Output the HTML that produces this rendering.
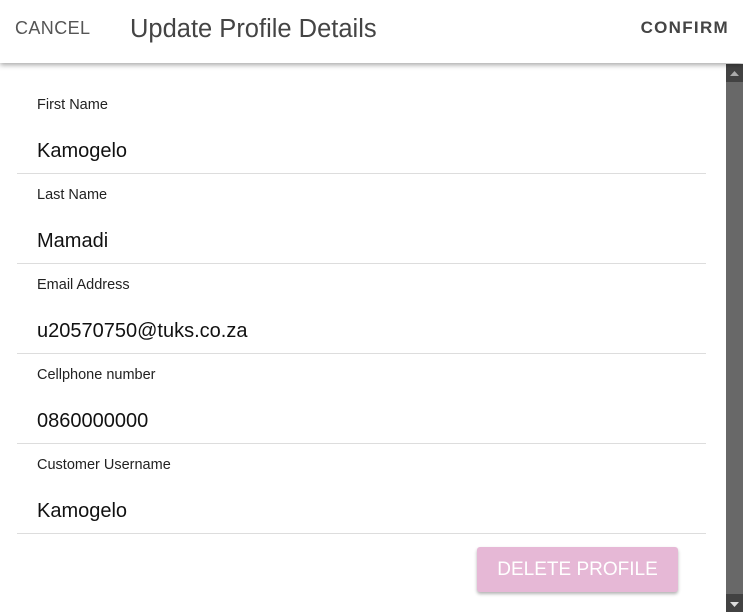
<!DOCTYPE html>
<html><head><style>
body{margin:0;width:743px;height:612px;overflow:hidden;background:#fff;font-family:"Liberation Sans",Arial,sans-serif;position:relative}
.hdr{position:absolute;left:0;top:0;width:743px;height:63px;background:#fff;box-shadow:0 2px 5px rgba(0,0,0,.35);z-index:2}
.cancel{position:absolute;left:15px;top:18px;font-size:18px;color:#555;letter-spacing:.4px}
.title{position:absolute;left:130px;top:15px;font-size:25.5px;color:#444}
.confirm{position:absolute;right:14px;top:18px;font-size:17px;font-weight:bold;color:#444;letter-spacing:1.3px}
.sb{position:absolute;left:726px;top:64px;width:17px;height:548px;background:#424242}
.thumb{position:absolute;left:726px;top:82px;width:17px;height:512px;background:#686868}
.field{position:absolute;left:17px;width:689px;height:89px;border-bottom:1px solid #ddd}
.lab{position:absolute;left:20px;top:13px;font-size:14.5px;color:#222}
.val{position:absolute;left:20px;top:56px;font-size:20px;color:#111}
.btn{position:absolute;left:477px;top:547px;width:201px;height:45px;background:#e6b8d6;border-radius:3px;box-shadow:0 2px 3px rgba(0,0,0,.3);color:#fff;font-size:19px;text-align:center;line-height:45px}
</style></head><body>
<div class="hdr"><div class="cancel">CANCEL</div><div class="title">Update Profile Details</div><div class="confirm">CONFIRM</div></div>
<div class="sb"></div><div class="thumb"></div>
<svg style="position:absolute;left:729px;top:70px" width="11" height="8"><path d="M1 6 L5.5 1 L10 6Z" fill="#aaa"/></svg>
<svg style="position:absolute;left:729px;top:601px" width="11" height="8"><path d="M1 1 L5.5 6 L10 1Z" fill="#ddd"/></svg>
<div class="field" style="top:84px"><div class="lab">First Name</div><div class="val">Kamogelo</div></div>
<div class="field" style="top:174px"><div class="lab">Last Name</div><div class="val">Mamadi</div></div>
<div class="field" style="top:264px"><div class="lab">Email Address</div><div class="val">u20570750@tuks.co.za</div></div>
<div class="field" style="top:354px"><div class="lab">Cellphone number</div><div class="val">0860000000</div></div>
<div class="field" style="top:444px"><div class="lab">Customer Username</div><div class="val">Kamogelo</div></div>
<div class="btn">DELETE PROFILE</div>
</body></html>
